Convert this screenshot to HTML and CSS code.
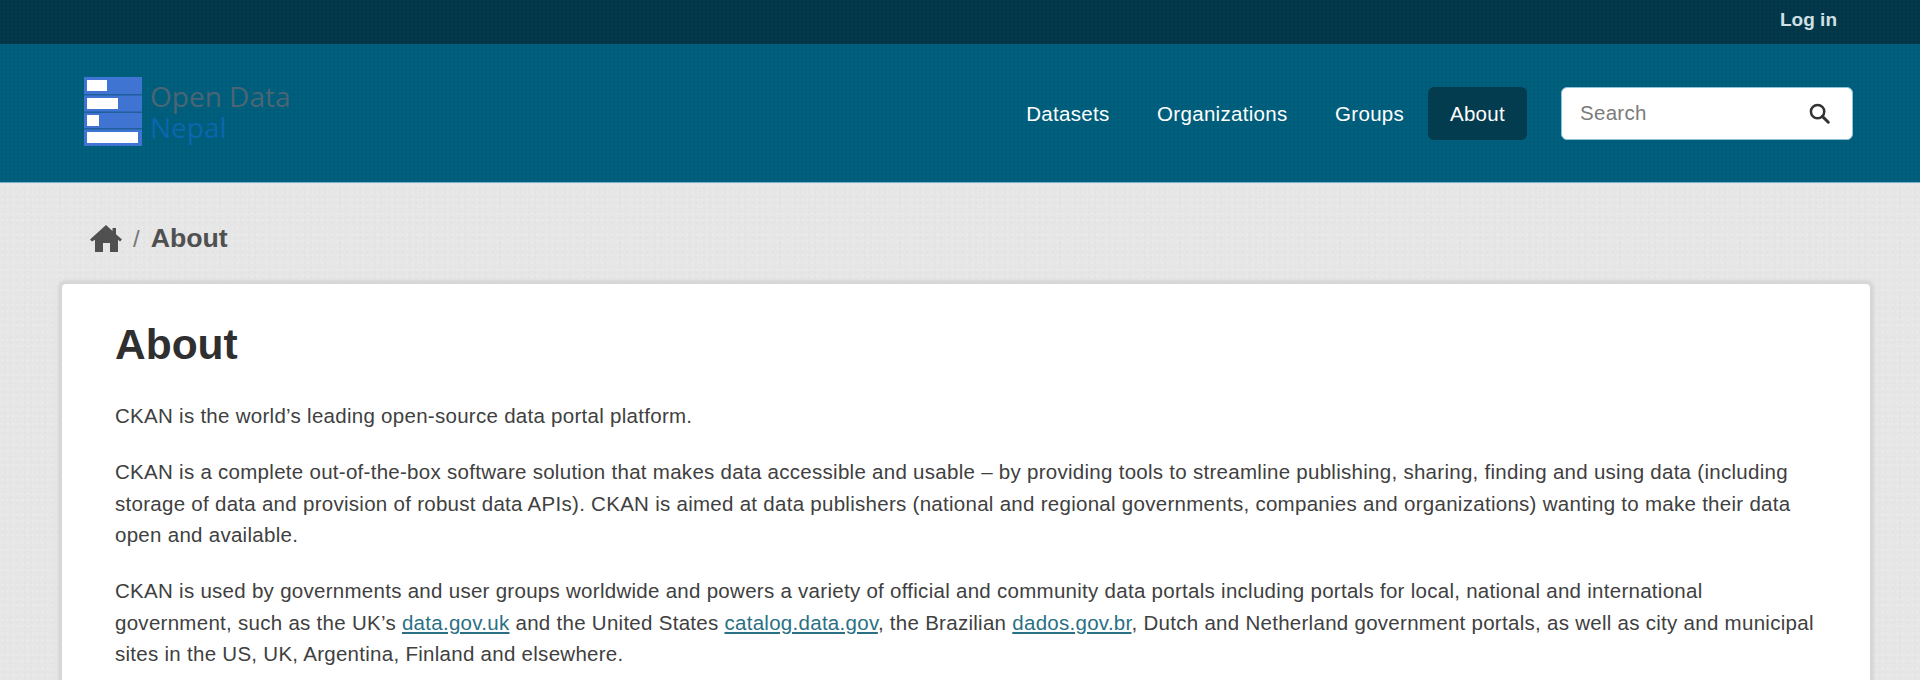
FILE: index.html
```html
<!DOCTYPE html>
<html lang="en">
<head>
<meta charset="utf-8">
<title>About - Open Data Nepal</title>
<link rel="stylesheet" href="styles.css">
</head>
<body>
<div class="account-bar">
  <a class="login" href="#">Log in</a>
</div>
<header class="masthead">
  <a class="logo" href="#">
    <svg class="logo-mark" width="58" height="69" viewBox="0 0 58 69" aria-hidden="true">
      <rect width="58" height="69" fill="#3f74d2"/>
      <rect y="17" width="58" height="1.500" fill="#1f5f9c"/>
      <rect y="34.500" width="58" height="1.500" fill="#1f5f9c"/>
      <rect y="51" width="58" height="1.500" fill="#1f5f9c"/>
      <rect x="3" y="3" width="20" height="11" fill="#fff"/>
      <rect x="3" y="21" width="31" height="11" fill="#fff"/>
      <rect x="3" y="38" width="12" height="11" fill="#fff"/>
      <rect x="3" y="55" width="51" height="11" fill="#fff"/>
    </svg>
    <span class="logo-text"><span class="logo-top">Open Data</span><span class="logo-bottom">Nepal</span></span>
  </a>
  <nav class="main-nav">
    <a href="#">Datasets</a>
    <a href="#">Organizations</a>
    <a href="#">Groups</a>
    <a class="active" href="#">About</a>
  </nav>
  <form class="search">
    <span class="search-placeholder">Search</span>
    <svg class="search-icon" width="21" height="21" viewBox="0 0 22 22" aria-hidden="true">
      <circle cx="9" cy="9" r="7" fill="none" stroke="#333" stroke-width="2.600"/>
      <path d="M14 14l6.200 6.200" stroke="#333" stroke-width="3" stroke-linecap="round"/>
    </svg>
  </form>
</header>
<main class="page">
  <div class="breadcrumb">
    <svg class="home" width="32" height="27" viewBox="0 0 32 27" aria-hidden="true">
      <path d="M16 0 L22.500 6 V3 H26 V9.200 L32 14.500 L30 16.500 L28 14.800 V27 H20 V18 H13 V27 H5 V14.800 L2 16.500 L0 14.500 Z" fill="#505050"/>
    </svg>
    <span class="sep">/</span>
    <strong>About</strong>
  </div>
  <article class="card">
    <h1>About</h1>
    <p>CKAN is the world’s leading open-source data portal platform.</p>
    <p>CKAN is a complete out-of-the-box software solution that makes data accessible and usable – by providing tools to streamline publishing, sharing, finding and using data (including<br>storage of data and provision of robust data APIs). CKAN is aimed at data publishers (national and regional governments, companies and organizations) wanting to make their data<br>open and available.</p>
    <p>CKAN is used by governments and user groups worldwide and powers a variety of official and community data portals including portals for local, national and international<br>government, such as the UK’s <a href="#">data.gov.uk</a> and the United States <a href="#">catalog.data.gov</a>, the Brazilian <a href="#">dados.gov.br</a>, Dutch and Netherland government portals, as well as city and municipal<br>sites in the US, UK, Argentina, Finland and elsewhere.</p>
  </article>
</main>
</body>
</html>
```
FILE: styles.css
```css
* { box-sizing: border-box; }
html, body { margin: 0; height: 680px; overflow: hidden; }
body {
  background-color: #e6e6e6;
  background-image:
    radial-gradient(circle, rgba(255,255,255,.14) 1px, transparent 1.5px),
    radial-gradient(circle, rgba(0,0,0,.012) 1px, transparent 1.5px);
  background-size: 5px 7px, 7px 5px;
  color: #404040;
  font-family: "Liberation Sans", Arial, sans-serif;
  font-size: 20.5px;
  letter-spacing: .28px;
  line-height: 31.5px;
}
.account-bar {
  height: 44px;
  background-color: #03384b;
  background-image: radial-gradient(circle, rgba(0,0,0,.08) 1px, transparent 1.5px);
  background-size: 4px 4px;
  display: flex;
  justify-content: flex-end;
  padding-right: 66px;
}
.login {
  height: 44px;
  padding: 0 17px;
  border-left: 1px solid #06323f;
  color: #d0e0e4;
  font-size: 19px;
  font-weight: bold;
  letter-spacing: 0;
  line-height: 40px;
  text-decoration: none;
}
.masthead {
  height: 139px;
  background-color: #005f7d;
  background-image: radial-gradient(circle, rgba(0,0,0,.05) 1px, transparent 1.5px);
  background-size: 4px 4px;
  border-bottom: 1px solid #6fb4cc;
  display: flex;
  align-items: center;
  padding: 0 67px 0 84px;
}
.logo { display: flex; align-items: center; gap: 8px; text-decoration: none; margin-top: -3px; }
.logo-text { display: flex; flex-direction: column; font-family: "Open Sans", sans-serif; font-size: 28px; letter-spacing: 0; line-height: 31px; }
.logo-top { color: #4a6674; }
.logo-bottom { color: #0b66ab; }
.main-nav { margin-left: auto; display: flex; align-items: center; }
.main-nav a {
  color: #fff;
  font-size: 20.5px;
  letter-spacing: .3px;
  line-height: 53px;
  height: 53px;
  padding: 0 23.8px;
  text-decoration: none;
  border-radius: 6px;
}
.main-nav a.active { background: #033c4f; padding: 0 22px; }
.search {
  margin-left: 34px;
  width: 292px;
  height: 53px;
  background: #fff;
  border: 1px solid #8fc3d8;
  border-radius: 6px;
  display: flex;
  align-items: center;
  justify-content: space-between;
  padding: 0 22px 0 18px;
}
.search-placeholder { color: #7b7b7b; }
.page { padding: 0 50px 0 62px; }
.breadcrumb {
  height: 101px;
  display: flex;
  align-items: center;
  padding: 10px 0 0 28px;
  font-size: 26.7px;
  letter-spacing: 0;
  color: #505050;
}
.sep { margin: 0 11px; font-size: 24px; color: #777; }
.card {
  background: #fff;
  border-radius: 4px;
  box-shadow: 0 0 3px 4px #d6d6d6;
  padding: 39px 53px;
  height: 500px;
}
h1 { margin: 0 0 33px; font-size: 42.5px; letter-spacing: 0; line-height: 44px; color: #2f2f2f; }
p { margin: 0 0 24.7px; }
a { color: #2a7085; }
```
